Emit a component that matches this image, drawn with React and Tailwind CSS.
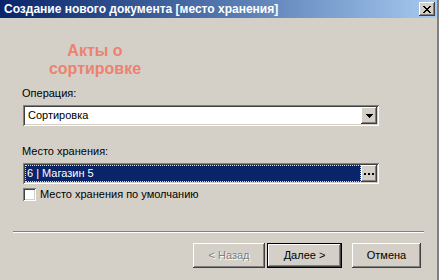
import React, { useState } from "react";

// Классическая рамка Windows: выпуклая и вдавленная
const raised =
  "shadow-[inset_-1px_-1px_#404040,inset_1px_1px_#ffffff,inset_-2px_-2px_#808080,inset_2px_2px_#d4d0c8]";
const sunken =
  "shadow-[inset_1px_1px_#808080,inset_-1px_-1px_#ffffff,inset_2px_2px_#404040,inset_-2px_-2px_#d4d0c8]";

function CloseIcon() {
  return (
    <svg width="8" height="7" viewBox="0 0 8 7" shapeRendering="crispEdges">
      <path
        d="M0 0h2v1h1v1h2v-1h1v-1h2v1h-1v1h-1v1h-1v1h1v1h1v1h1v1h-2v-1h-1v-1h-2v1h-1v1h-2v-1h1v-1h1v-1h1v-1h-1v-1h-1v-1h-1z"
        fill="#000"
      />
    </svg>
  );
}

function ArrowIcon() {
  return (
    <svg width="7" height="4" viewBox="0 0 7 4" shapeRendering="crispEdges">
      <path d="M0 0h7v1h-1v1h-1v1h-1v1h-1v-1h-1v-1h-1v-1h-1z" fill="#000" />
    </svg>
  );
}

function DotsIcon() {
  return (
    <svg width="10" height="2" viewBox="0 0 10 2" shapeRendering="crispEdges">
      <rect x="0" y="0" width="2" height="2" fill="#000" />
      <rect x="4" y="0" width="2" height="2" fill="#000" />
      <rect x="8" y="0" width="2" height="2" fill="#000" />
    </svg>
  );
}

export default function App() {
  const [byDefault, setByDefault] = useState(false);

  return (
    <div className="w-[439px] h-[280px] overflow-hidden bg-[#d4d0c8] font-['Liberation_Sans',Arial,sans-serif] text-[11px] text-black flex flex-col border-r-2 border-r-[#808080]">
      {/* Заголовок окна */}
      <div className="h-[18px] flex items-center justify-between pl-[4px] pr-[2px] bg-linear-to-r from-[#0a246a] to-[#a6caf0]">
        <span className="font-bold text-[12px] text-white leading-none">
          Создание нового документа [место хранения]
        </span>
        <button
          className={`w-[16px] h-[14px] flex items-center justify-center bg-[#d4d0c8] ${raised}`}
        >
          <CloseIcon />
        </button>
      </div>

      {/* Тело диалога */}
      <div className="flex flex-col pl-[22px]">
        <div className="mt-[24px] w-[146px] text-center text-[16px] leading-[18px] font-bold text-[#ec8270]">
          Акты о сортировке
        </div>

        <label className="mt-[9px] leading-[13px]">Операция:</label>
        <div
          className={`mt-[5px] ml-[1px] w-[356px] h-[21px] p-[2px] flex items-center bg-white ${sunken}`}
        >
          <span className="flex-1 pl-[3px]">Сортировка</span>
          <button
            className={`w-[16px] h-[17px] flex items-center justify-center bg-[#d4d0c8] ${raised}`}
          >
            <ArrowIcon />
          </button>
        </div>

        <label className="mt-[19px] leading-[13px]">Место хранения:</label>
        <div
          className={`mt-[5px] ml-[1px] w-[356px] h-[21px] p-[2px] flex items-center bg-white ${sunken}`}
        >
          <span className="flex-1 h-full flex items-center pl-[1px] bg-[#0a246a] text-white border border-dotted border-[#f2dc8c]">
            6 | Магазин 5
          </span>
          <button
            className={`w-[16px] h-[17px] flex items-center justify-center bg-[#d4d0c8] ${raised}`}
          >
            <DotsIcon />
          </button>
        </div>

        <label className="mt-[4px] ml-[1px] flex items-center gap-[4px] leading-[13px]">
          <span
            onClick={() => setByDefault(!byDefault)}
            className={`w-[13px] h-[13px] bg-white ${sunken}`}
          />
          Место хранения по умолчанию
        </label>
      </div>

      {/* Разделитель */}
      <div className="mt-[30px] mx-[13px] h-[2px] border-t border-t-[#808080] border-b border-b-white" />

      {/* Кнопки */}
      <div className="mt-[10px] flex pl-[193px]">
        <button
          disabled
          className={`w-[72px] h-[25px] bg-[#d4d0c8] text-[#808080] [text-shadow:1px_1px_0_#ffffff] ${raised}`}
        >
          &lt; Назад
        </button>
        <button
          className={`ml-[2px] w-[75px] h-[25px] border border-black bg-[#d4d0c8] ${raised}`}
        >
          Далее &gt;
        </button>
        <button
          className={`ml-[10px] w-[69px] h-[25px] bg-[#d4d0c8] ${raised}`}
        >
          Отмена
        </button>
      </div>
    </div>
  );
}
